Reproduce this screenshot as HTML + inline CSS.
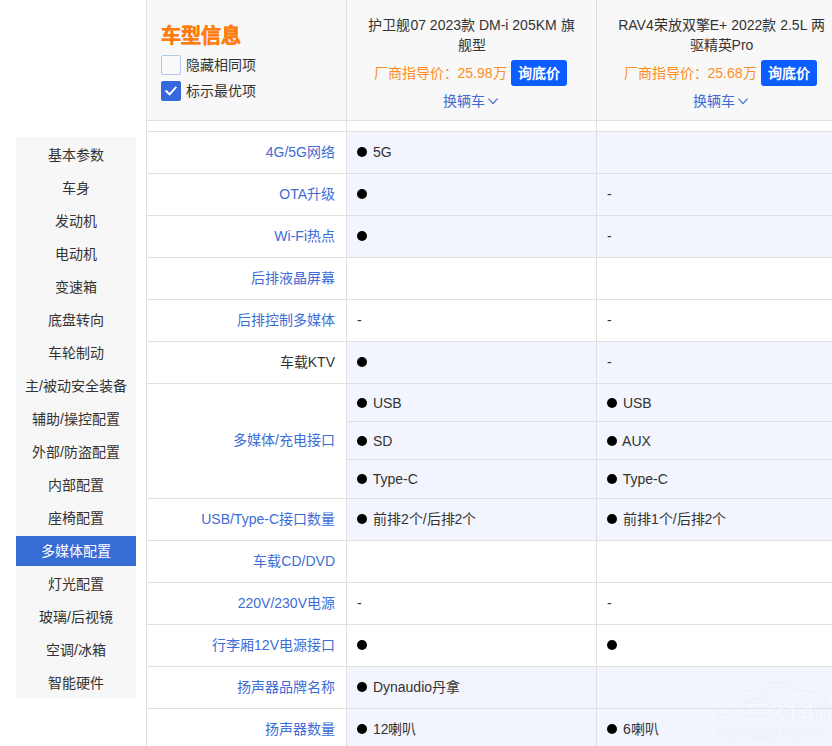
<!DOCTYPE html>
<html lang="zh-CN">
<head>
<meta charset="utf-8">
<title>车型对比</title>
<style>
*{box-sizing:border-box;margin:0;padding:0}
html,body{width:832px;height:746px;overflow:hidden;background:#fff}
body{font-family:"Liberation Sans",sans-serif;font-size:14px;color:#333;position:relative}
/* sidebar */
.side{position:absolute;left:16px;top:137px;width:120px;height:561px;background:#f7f7f7;padding-top:3px}
.side div{height:30px;line-height:30px;margin-bottom:3px;text-align:center;font-size:14px;color:#333;white-space:nowrap}
.side div.on{background:#386cd5;color:#fff}
/* table */
.tb{position:absolute;left:146px;top:0;width:700px}
.row{display:flex;border-bottom:1px solid #e0e0e0}
.c0{width:201px;border-left:1px solid #e0e0e0;border-right:1px solid #e0e0e0;background:#fff}
.c1{width:250px;border-right:1px solid #e0e0e0}
.c2{width:249px}
/* header */
.head{height:121px}
.head .c0,.head .c1,.head .c2{background:#f8f8f8}
.head .c0{padding:24px 0 0 14px}
.head h2{margin-bottom:7px}
.head h2{font-size:20px;color:#ff7c0c;-webkit-text-stroke:0.45px #ff7c0c;font-weight:bold;line-height:24px;height:24px}
.ck{display:flex;align-items:center;height:20px;margin-top:6px;line-height:20px}
.ck i{display:block;width:20px;height:20px;border:1px solid #b4c6ee;border-radius:2px;background:#f9f9f9;margin-right:5px}
.ck i.on{background:#3568dc;border-color:#3568dc}
.ck i svg{display:block}
.car{padding-top:15px;text-align:center}
.car .nm{line-height:20px;height:40px;color:#333}
.car .pr{margin-top:5px;height:26px;line-height:26px;color:#ff8c1f;white-space:nowrap}
.car .pr b{display:inline-block;vertical-align:top;width:56px;height:26px;line-height:26px;background:#0c5dff;color:#fff;border-radius:3px;font-weight:bold;margin:0 2px 0 1px}
.car .sw{margin-top:5px;line-height:20px;height:20px;color:#3f6cd3}
.car .sw svg{display:inline-block;vertical-align:top;margin:7px 2px 0 0}
/* rows */
.gap{height:11px}
.r{height:42px;line-height:41px}
.r .c0,.m .c0{text-align:right;padding-right:11px;color:#3d6dd6;white-space:nowrap;overflow:hidden}
.r .c0.k{color:#333}
.r .c1,.r .c2{padding-left:10px;color:#333;white-space:nowrap}
.d .c1,.d .c2{background:#f2f5fd}
.m{height:115px}
.m .c0{line-height:112px}
.m .c1,.m .c2{white-space:nowrap}
.m p{height:38px;line-height:39px;padding-left:10px;border-bottom:1px solid #e0e0e0}
.m p:last-child{border-bottom:0}
.o{display:inline-block;width:10px;height:10px;border-radius:50%;background:#000;vertical-align:top;margin:15px 2px 0 0}
.m .o{margin-top:14px}
</style>
</head>
<body>
<div class="side">
<div>基本参数</div><div>车身</div><div>发动机</div><div>电动机</div><div>变速箱</div><div>底盘转向</div><div>车轮制动</div><div>主/被动安全装备</div><div>辅助/操控配置</div><div>外部/防盗配置</div><div>内部配置</div><div>座椅配置</div><div class="on">多媒体配置</div><div>灯光配置</div><div>玻璃/后视镜</div><div>空调/冰箱</div><div>智能硬件</div>
</div>
<div class="tb">
<div class="row head">
<div class="c0"><h2>车型信息</h2>
<div class="ck"><i></i>隐藏相同项</div>
<div class="ck"><i class="on"><svg width="18" height="18" viewBox="0 0 18 18"><path d="M3.6 8.6 L7.6 12.3 L14.3 4.9" fill="none" stroke="#fff" stroke-width="2"/></svg></i>标示最优项</div>
</div>
<div class="c1 car"><div class="nm">护卫舰07 2023款 DM-i 205KM 旗<br>舰型</div><div class="pr">厂商指导价：25.98万 <b>询底价</b></div><div class="sw">换辆车 <svg width="10" height="7" viewBox="0 0 10 7"><path d="M0.4 0.6 L5 5.7 L9.6 0.6" fill="none" stroke="#3f6cd3" stroke-width="1.2"/></svg></div></div>
<div class="c2 car"><div class="nm">RAV4荣放双擎E+ 2022款 2.5L 两<br>驱精英Pro</div><div class="pr">厂商指导价：25.68万 <b>询底价</b></div><div class="sw">换辆车 <svg width="10" height="7" viewBox="0 0 10 7"><path d="M0.4 0.6 L5 5.7 L9.6 0.6" fill="none" stroke="#3f6cd3" stroke-width="1.2"/></svg></div></div>
</div>
<div class="row gap"><div class="c0"></div><div class="c1"></div><div class="c2"></div></div>
<div class="row r d"><div class="c0">4G/5G网络</div><div class="c1"><span class="o"></span> 5G</div><div class="c2"></div></div>
<div class="row r d"><div class="c0">OTA升级</div><div class="c1"><span class="o"></span></div><div class="c2">-</div></div>
<div class="row r d"><div class="c0">Wi-Fi热点</div><div class="c1"><span class="o"></span></div><div class="c2">-</div></div>
<div class="row r"><div class="c0">后排液晶屏幕</div><div class="c1"></div><div class="c2"></div></div>
<div class="row r"><div class="c0">后排控制多媒体</div><div class="c1">-</div><div class="c2">-</div></div>
<div class="row r d"><div class="c0 k">车载KTV</div><div class="c1"><span class="o"></span></div><div class="c2">-</div></div>
<div class="row m d"><div class="c0">多媒体/充电接口</div>
<div class="c1"><p><span class="o"></span> USB</p><p><span class="o"></span> SD</p><p><span class="o"></span> Type-C</p></div>
<div class="c2"><p><span class="o"></span> USB</p><p><span class="o"></span> AUX</p><p><span class="o"></span> Type-C</p></div></div>
<div class="row r d"><div class="c0">USB/Type-C接口数量</div><div class="c1"><span class="o"></span> 前排2个/后排2个</div><div class="c2"><span class="o"></span> 前排1个/后排2个</div></div>
<div class="row r"><div class="c0">车载CD/DVD</div><div class="c1"></div><div class="c2"></div></div>
<div class="row r"><div class="c0">220V/230V电源</div><div class="c1">-</div><div class="c2">-</div></div>
<div class="row r"><div class="c0">行李厢12V电源接口</div><div class="c1"><span class="o"></span></div><div class="c2"><span class="o"></span></div></div>
<div class="row r d"><div class="c0">扬声器品牌名称</div><div class="c1"><span class="o"></span> Dynaudio丹拿</div><div class="c2"></div></div>
<div class="row r d"><div class="c0">扬声器数量</div><div class="c1"><span class="o"></span> 12喇叭</div><div class="c2"><span class="o"></span> 6喇叭</div></div>
</div>
<svg class="wm" width="120" height="70" viewBox="0 0 120 70" style="position:absolute;left:712px;top:676px;opacity:.5" font-family="Liberation Sans, sans-serif" font-weight="bold">
<g fill="none" stroke="#dfe4f3" stroke-width="0.7">
<path d="M5.8 39 C12 26 26 15 41 14.4 C47 14.6 52 17.5 55 21.6"/>
<path d="M5.8 39 L20 39 C25 28 36 21 55 21.6"/>
<path d="M39 14.4 C46 8 54 5.6 62 5.8 C72 6 80 9 86.5 14.4"/>
<path d="M50.5 17.3 C56 12.5 62 10.6 68 10.8 C75 11 80 13 84 16"/>
<path d="M85 14.4 C96 14 107 17 114 23"/>
<rect x="106.5" y="25" width="8" height="22.5" rx="2"/>
</g>
<g fill="#f7f9ff" stroke="#e3e7f5" stroke-width="1.1" paint-order="stroke">
<text x="31" y="46.5" font-size="27">车314</text>
<text x="5" y="63.5" font-size="12.2" stroke-width="0.8">专注汽车行业的网站</text>
</g>
</svg>
</body>
</html>
